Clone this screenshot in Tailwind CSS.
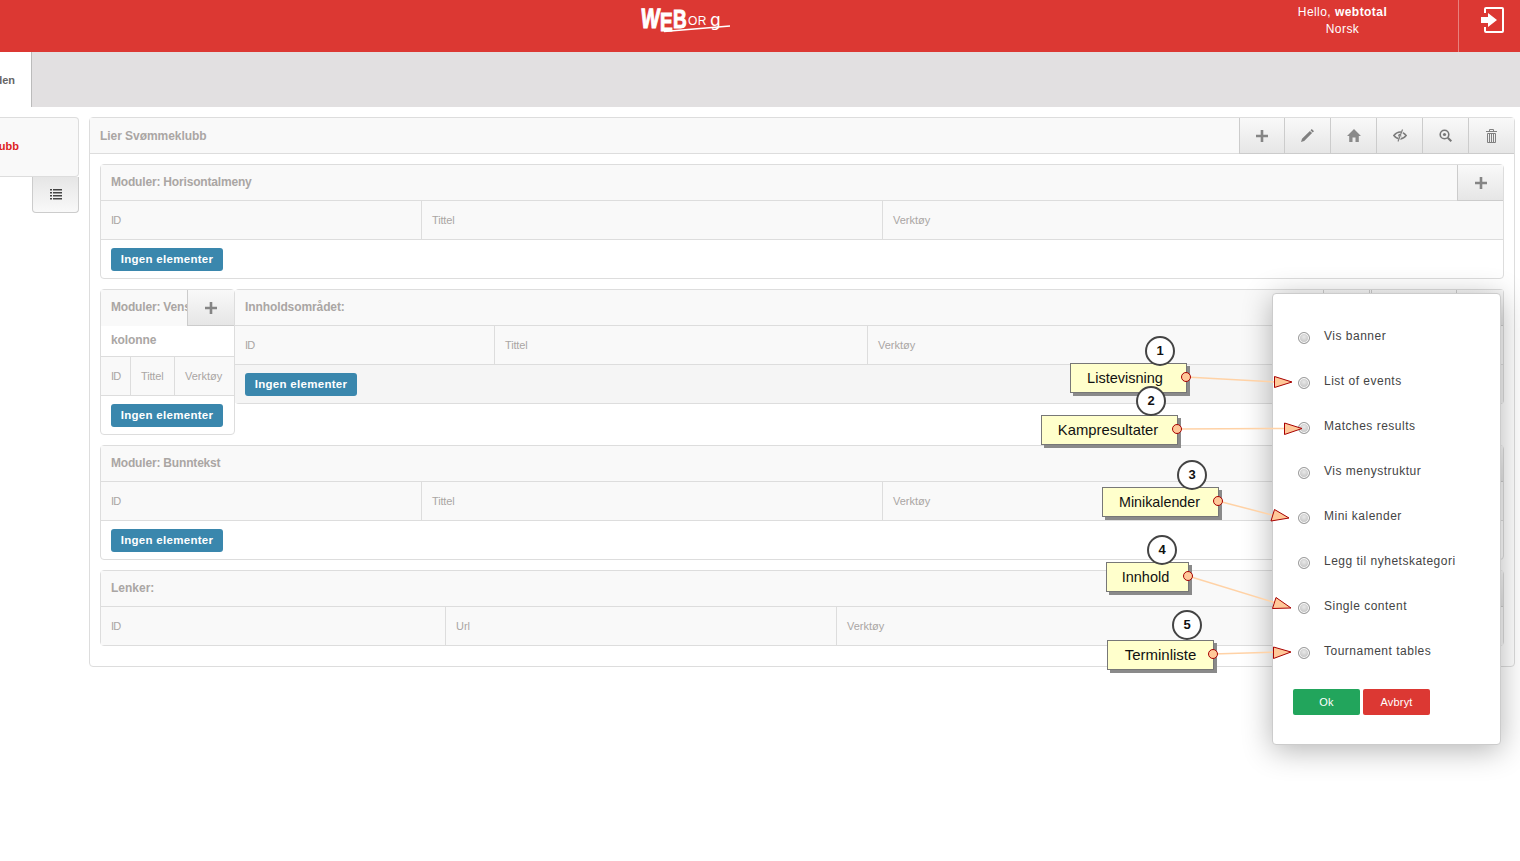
<!DOCTYPE html>
<html><head><meta charset="utf-8"><title>Weborg</title>
<script src="https://cdn.jsdelivr.net/npm/@tailwindcss/browser@4"></script></head>
<body class="relative h-[861px] overflow-hidden bg-white font-['Liberation_Sans',Arial,sans-serif] text-[12px] text-[#aaa6a4]">

<header class="flex h-[52px] bg-[#dc3833] text-white">
  <div class="relative ml-[642px] mt-[4px] h-[36px] w-[90px] font-['Liberation_Sans'] font-bold">
    <span class="absolute left-0 top-0 origin-top-left -skew-x-6 scale-y-[1.4] text-[20px] leading-[20px] [-webkit-text-stroke:0.8px_white]">W</span>
    <span class="absolute left-[18px] top-[5px] origin-top-left scale-y-[1.4] text-[19px] leading-[19px] [-webkit-text-stroke:0.8px_white]">E</span>
    <span class="absolute left-[31px] top-[2px] origin-top-left scale-y-[1.35] text-[19px] leading-[19px] [-webkit-text-stroke:0.8px_white]">B</span>
    <span class="absolute left-[46px] top-[11px] text-[12px] font-normal leading-[13px] tracking-[0.5px]">OR</span>
    <span class="absolute left-[68px] top-[8px] font-['DejaVu_Sans'] text-[17px] font-normal leading-[17px]">g</span>
    <svg class="absolute left-0 top-0" width="90" height="36" viewBox="0 0 90 36"><path d="M22 27.500 L88 22" stroke="#fff" stroke-width="1.300" fill="none"/></svg>
  </div>
  <div class="ml-auto flex w-[232px] flex-col items-center border-r border-[#e8817d] pt-[4px] leading-[17px] tracking-[0.450px]">
    <div>Hello, <b>webtotal</b></div>
    <div>Norsk</div>
  </div>
  <div class="w-[61px] pl-[22px] pt-[7px]">
    <svg width="24" height="26" viewBox="0 0 24 26" fill="none"><path d="M4 6V2C4 1.400 4.400 1 5 1H21C21.600 1 22 1.400 22 2V24C22 24.600 21.600 25 21 25H5C4.400 25 4 24.600 4 24V20" stroke="#fff" stroke-width="2"/><path d="M0 10h7V6l9 7-9 7v-4H0z" fill="#fff"/></svg>
  </div>
</header>

<nav class="flex h-[55px] bg-[#e2e0e1]">
  <div class="flex w-[32px] items-center justify-end overflow-hidden border-r border-[#bbb] bg-white pr-[16px] pt-[1px] text-[11px] font-bold text-[#666]"><span class="shrink-0">Siden</span></div>
</nav>

<main class="flex pt-[10px]">
  <aside class="w-[79px] shrink-0">
    <div class="flex h-[60px] items-center justify-end overflow-hidden rounded-r-[4px] border border-l-0 border-[#ddd] bg-[#f9f9f9] pr-[59px] pb-[1px] text-[11px] font-bold text-[#dd2222]"><span class="shrink-0">Lier Svømmeklubb</span></div>
    <div class="ml-[32px] flex h-[36px] w-[47px] items-center justify-center rounded-b-[4px] border border-t-0 border-[#ccc] bg-gradient-to-b from-[#e6e6e6] to-[#f9f9f9]">
      <svg width="12" height="11" viewBox="0 0 12 11" fill="#444"><path d="M0 0h2v1.500H0zM3 0h9v1.500H3zM0 3h2v1.500H0zM3 3h9v1.500H3zM0 6h2v1.500H0zM3 6h9v1.500H3zM0 9h2v1.500H0zM3 9h9v1.500H3z"/></svg>
    </div>
  </aside>

  <section class="ml-[10px] h-[550px] w-[1426px] rounded-[4px] border border-[#ddd]">
    <div class="flex h-[36px] border-b border-[#ddd] bg-[#f9f9f9]">
      <div class="flex-1 pl-[10px] pt-[11px] font-bold leading-[14px] tracking-[-0.050px]">Lier Svømmeklubb</div>
      <div class="flex h-[36px] w-[46px] items-center justify-center border-x border-b border-[#ccc] bg-gradient-to-b from-[#f9f9f9] to-[#e6e6e6]"><svg width="12" height="12" viewBox="0 0 12 12" fill="#858585"><path d="M4.700 0h2.600v4.700H12v2.600H7.300V12H4.700V7.300H0V4.700h4.700z"/></svg></div>
      <div class="flex h-[36px] w-[46px] items-center justify-center border-r border-b border-[#ccc] bg-gradient-to-b from-[#f9f9f9] to-[#e6e6e6]"><svg width="13" height="13" viewBox="0 0 13 13" fill="#808080"><path d="M10.800 0 13 2.200 11.700 3.500 9.500 1.300zM8.900 1.900l2.200 2.200L3.200 12 0 13l1-3.200z"/></svg></div>
      <div class="flex h-[36px] w-[46px] items-center justify-center border-r border-b border-[#ccc] bg-gradient-to-b from-[#f9f9f9] to-[#e6e6e6]"><svg width="14" height="13" viewBox="0 0 14 13" fill="#8a8a8a"><path d="M7 0 14 7h-2.200v6H8.500V8.500h-3V13H2.200V7H0z"/></svg></div>
      <div class="flex h-[36px] w-[46px] items-center justify-center border-r border-b border-[#ccc] bg-gradient-to-b from-[#f9f9f9] to-[#e6e6e6]"><svg width="14" height="13" viewBox="0 0 14 13" fill="none"><path d="M0.800 6.500C3 4 4.800 3 7 3s4 1 6.200 3.500C11 9 9.200 10 7 10S3 9 0.800 6.500z" stroke="#7c7c7c" stroke-width="1.500"/><circle cx="7" cy="6.500" r="1.800" fill="#7c7c7c"/><path d="M10 0.500 5.500 12.500" stroke="#f0f0f0" stroke-width="2"/><path d="M9.500 0.500 5 12.500" stroke="#7c7c7c" stroke-width="1.100"/></svg></div>
      <div class="flex h-[36px] w-[46px] items-center justify-center border-r border-b border-[#ccc] bg-gradient-to-b from-[#f9f9f9] to-[#e6e6e6]"><svg width="13" height="13" viewBox="0 0 13 13" fill="none"><circle cx="5.500" cy="5.500" r="4.300" stroke="#777" stroke-width="1.600"/><circle cx="5.500" cy="5.500" r="1.600" fill="#777"/><path d="M8.800 8.800l3.500 3.500" stroke="#777" stroke-width="2"/></svg></div>
      <div class="flex h-[36px] w-[45px] items-center justify-center rounded-tr-[4px] border-b border-[#ccc] bg-gradient-to-b from-[#f9f9f9] to-[#e6e6e6]"><svg width="11" height="14" viewBox="0 0 11 14" fill="none" stroke="#808080"><path d="M0 2.500h11M3.500 2V.5h4V2" stroke-width="1"/><path d="M1.500 4.500h8v9h-8zM3.500 4.500v9M5.500 4.500v9M7.500 4.500v9" stroke-width="1"/></svg></div>
    </div>

    <div class="flex flex-col gap-[10px] px-[10px] pt-[10px]">
      <div class="h-[115px] rounded-[4px] border border-[#ddd]">
        <div class="flex h-[36px] border-b border-[#ddd] bg-[#f9f9f9]">
          <div class="flex-1 pl-[10px] pt-[10px] font-bold leading-[14px] tracking-[-0.180px]">Moduler: Horisontalmeny</div>
          <div class="flex h-[36px] w-[46px] items-center justify-center rounded-tr-[4px] border-b border-l border-[#ccc] bg-gradient-to-b from-[#f9f9f9] to-[#e6e6e6]"><svg width="12" height="12" viewBox="0 0 12 12" fill="#858585"><path d="M4.700 0h2.600v4.700H12v2.600H7.300V12H4.700V7.300H0V4.700h4.700z"/></svg></div>
        </div>
        <div class="flex h-[39px] items-center border-b border-[#ddd] bg-[#f9f9f9] text-[11px]">
          <div class="flex h-full w-[321px] items-center border-r border-[#ddd] pl-[10px] tracking-[-0.800px]">ID</div>
          <div class="flex h-full w-[461px] items-center border-r border-[#ddd] pl-[10px] tracking-[-0.150px]">Tittel</div>
          <div class="pl-[10px]">Verktøy</div>
        </div>
        <div class="px-[10px] pt-[8px]"><span class="inline-block h-[23px] w-[112px] rounded-[3px] bg-[#3a87ad] text-center text-[11.500px] font-bold leading-[23px] tracking-[0.300px] text-white">Ingen elementer</span></div>
      </div>

      <div class="flex h-[146px] items-start">
        <div class="h-[146px] w-[135px] shrink-0 rounded-[4px] border border-[#ddd]">
          <div class="flex h-[36px] bg-[#f9f9f9]">
            <div class="w-[86px] overflow-hidden whitespace-nowrap pl-[10px] pt-[10px] font-bold leading-[14px] tracking-[-0.180px]">Moduler: Vens</div>
            <div class="flex h-[36px] w-[47px] items-center justify-center border-b border-l border-[#ccc] bg-gradient-to-b from-[#f9f9f9] to-[#e6e6e6]"><svg width="12" height="12" viewBox="0 0 12 12" fill="#858585"><path d="M4.700 0h2.600v4.700H12v2.600H7.300V12H4.700V7.300H0V4.700h4.700z"/></svg></div>
          </div>
          <div class="h-[31px] border-b border-[#ddd] bg-white pl-[10px] pt-[7px] font-bold leading-[14px] tracking-[-0.100px]">kolonne</div>
          <div class="flex h-[39px] items-center border-b border-[#ddd] bg-[#f9f9f9] text-[11px]">
            <div class="flex h-full w-[30px] items-center border-r border-[#ddd] pl-[10px] tracking-[-0.800px]">ID</div>
            <div class="flex h-full w-[44px] items-center border-r border-[#ddd] pl-[10px] tracking-[-0.150px]">Tittel</div>
            <div class="pl-[10px]">Verktøy</div>
          </div>
          <div class="px-[10px] pt-[8px]"><span class="inline-block h-[23px] w-[112px] rounded-[3px] bg-[#3a87ad] text-center text-[11.500px] font-bold leading-[23px] tracking-[0.300px] text-white">Ingen elementer</span></div>
        </div>
        <div class="h-[115px] flex-1 rounded-[4px] border border-l-0 border-[#ddd]">
          <div class="flex h-[36px] border-b border-[#ddd] bg-[#f9f9f9]">
            <div class="flex-1 pl-[10px] pt-[10px] font-bold leading-[14px] tracking-[-0.100px]">Innholdsområdet:</div>
            <div class="h-[36px] w-[47px] border-x border-b border-[#ccc] bg-gradient-to-b from-[#f9f9f9] to-[#e6e6e6]"></div>
            <div class="ml-[1px] h-[36px] w-[86px] border-x border-b border-[#ccc] bg-gradient-to-b from-[#f9f9f9] to-[#e6e6e6]"></div>
            <div class="h-[36px] w-[46px] rounded-tr-[4px] border-b border-[#ccc] bg-gradient-to-b from-[#f9f9f9] to-[#e6e6e6]"></div>
          </div>
          <div class="flex h-[39px] items-center border-b border-[#ddd] bg-[#f9f9f9] text-[11px]">
            <div class="flex h-full w-[260px] items-center border-r border-[#ddd] pl-[10px] tracking-[-0.800px]">ID</div>
            <div class="flex h-full w-[373px] items-center border-r border-[#ddd] pl-[10px] tracking-[-0.150px]">Tittel</div>
            <div class="pl-[10px]">Verktøy</div>
          </div>
          <div class="h-[38px] bg-[#f5f5f5] px-[10px] pt-[8px]"><span class="inline-block h-[23px] w-[112px] rounded-[3px] bg-[#3a87ad] text-center text-[11.500px] font-bold leading-[23px] tracking-[0.300px] text-white">Ingen elementer</span></div>
        </div>
      </div>

      <div class="h-[115px] rounded-[4px] border border-[#ddd]">
        <div class="flex h-[36px] border-b border-[#ddd] bg-[#f9f9f9]">
          <div class="flex-1 pl-[10px] pt-[10px] font-bold leading-[14px] tracking-[-0.180px]">Moduler: Bunntekst</div>
          <div class="h-[36px] w-[46px] rounded-tr-[4px] border-b border-l border-[#ccc] bg-gradient-to-b from-[#f9f9f9] to-[#e6e6e6]"></div>
        </div>
        <div class="flex h-[39px] items-center border-b border-[#ddd] bg-[#f9f9f9] text-[11px]">
          <div class="flex h-full w-[321px] items-center border-r border-[#ddd] pl-[10px] tracking-[-0.800px]">ID</div>
          <div class="flex h-full w-[461px] items-center border-r border-[#ddd] pl-[10px] tracking-[-0.150px]">Tittel</div>
          <div class="pl-[10px]">Verktøy</div>
        </div>
        <div class="px-[10px] pt-[8px]"><span class="inline-block h-[23px] w-[112px] rounded-[3px] bg-[#3a87ad] text-center text-[11.500px] font-bold leading-[23px] tracking-[0.300px] text-white">Ingen elementer</span></div>
      </div>

      <div class="h-[76px] rounded-[4px] border border-[#ddd]">
        <div class="flex h-[36px] border-b border-[#ddd] bg-[#f9f9f9]">
          <div class="flex-1 pl-[10px] pt-[10px] font-bold leading-[14px]">Lenker:</div>
          <div class="h-[36px] w-[46px] rounded-tr-[4px] border-b border-l border-[#ccc] bg-gradient-to-b from-[#f9f9f9] to-[#e6e6e6]"></div>
        </div>
        <div class="flex h-[38px] items-center bg-[#f9f9f9] text-[11px]">
          <div class="flex h-full w-[345px] items-center border-r border-[#ddd] pl-[10px] tracking-[-0.800px]">ID</div>
          <div class="flex h-full w-[391px] items-center border-r border-[#ddd] pl-[10px]">Url</div>
          <div class="pl-[10px]">Verktøy</div>
        </div>
      </div>
    </div>
  </section>
</main>

<!-- modal dialog -->
<div class="absolute left-[1272px] top-[293px] h-[452px] w-[229px] rounded-[4px] border border-[#ccc] bg-white px-[20px] pt-[20px] text-[12px] tracking-[0.500px] text-[#444] shadow-[0_5px_30px_rgba(0,0,0,0.3)]">
  <div class="flex h-[45px] items-start pl-[5px]"><span class="mt-[18px] h-[12px] w-[12px] shrink-0 rounded-full border border-[#999] bg-[radial-gradient(circle_at_50%_40%,#e8e8e8,#b4b4b4)] shadow-[inset_0_0_0_1px_#fff]"></span><span class="ml-[14px] mt-[14px] leading-[16px]">Vis banner</span></div>
  <div class="flex h-[45px] items-start pl-[5px]"><span class="mt-[18px] h-[12px] w-[12px] shrink-0 rounded-full border border-[#999] bg-[radial-gradient(circle_at_50%_40%,#e8e8e8,#b4b4b4)] shadow-[inset_0_0_0_1px_#fff]"></span><span class="ml-[14px] mt-[14px] leading-[16px]">List of events</span></div>
  <div class="flex h-[45px] items-start pl-[5px]"><span class="mt-[18px] h-[12px] w-[12px] shrink-0 rounded-full border border-[#999] bg-[radial-gradient(circle_at_50%_40%,#e8e8e8,#b4b4b4)] shadow-[inset_0_0_0_1px_#fff]"></span><span class="ml-[14px] mt-[14px] leading-[16px]">Matches results</span></div>
  <div class="flex h-[45px] items-start pl-[5px]"><span class="mt-[18px] h-[12px] w-[12px] shrink-0 rounded-full border border-[#999] bg-[radial-gradient(circle_at_50%_40%,#e8e8e8,#b4b4b4)] shadow-[inset_0_0_0_1px_#fff]"></span><span class="ml-[14px] mt-[14px] leading-[16px]">Vis menystruktur</span></div>
  <div class="flex h-[45px] items-start pl-[5px]"><span class="mt-[18px] h-[12px] w-[12px] shrink-0 rounded-full border border-[#999] bg-[radial-gradient(circle_at_50%_40%,#e8e8e8,#b4b4b4)] shadow-[inset_0_0_0_1px_#fff]"></span><span class="ml-[14px] mt-[14px] leading-[16px]">Mini kalender</span></div>
  <div class="flex h-[45px] items-start pl-[5px]"><span class="mt-[18px] h-[12px] w-[12px] shrink-0 rounded-full border border-[#999] bg-[radial-gradient(circle_at_50%_40%,#e8e8e8,#b4b4b4)] shadow-[inset_0_0_0_1px_#fff]"></span><span class="ml-[14px] mt-[14px] leading-[16px]">Legg til nyhetskategori</span></div>
  <div class="flex h-[45px] items-start pl-[5px]"><span class="mt-[18px] h-[12px] w-[12px] shrink-0 rounded-full border border-[#999] bg-[radial-gradient(circle_at_50%_40%,#e8e8e8,#b4b4b4)] shadow-[inset_0_0_0_1px_#fff]"></span><span class="ml-[14px] mt-[14px] leading-[16px]">Single content</span></div>
  <div class="flex h-[45px] items-start pl-[5px]"><span class="mt-[18px] h-[12px] w-[12px] shrink-0 rounded-full border border-[#999] bg-[radial-gradient(circle_at_50%_40%,#e8e8e8,#b4b4b4)] shadow-[inset_0_0_0_1px_#fff]"></span><span class="ml-[14px] mt-[14px] leading-[16px]">Tournament tables</span></div>
  <div class="mt-[15px] flex gap-[3px] text-[11px] tracking-[0.200px] text-white">
    <span class="h-[26px] w-[67px] rounded-[2px] bg-[#22a55c] text-center leading-[26px]">Ok</span>
    <span class="h-[26px] w-[67px] rounded-[2px] bg-[#dc3833] text-center leading-[26px]">Avbryt</span>
  </div>
</div>

<!-- annotation overlay -->
<svg class="absolute left-0 top-0" width="1520" height="861" viewBox="0 0 1520 861" fill="none">
  <g stroke="#ffd2a6" stroke-width="1.500">
    <path d="M1186 377 1276 382M1177 429 1286 428.500M1218 501 1276 516M1188 576 1276 603M1213 654 1276 652"/>
  </g>
  <g fill="#ffc899" stroke="#a80000" stroke-width="1">
    <path d="M1274.500 376.500 1292 382 1274.500 387.500z"/>
    <path d="M1284.500 423 1302 428.500 1284.500 434.500z"/>
    <path d="M1274.500 509.500 1289 518 1271 521z"/>
    <path d="M1276 597.500 1291 608 1272.500 608.500z"/>
    <path d="M1273.500 647 1291 652 1273.500 658.500z"/>
  </g>
</svg>

<div class="absolute left-[1070px] top-[363px] flex h-[30px] w-[117px] items-center justify-center border border-[#777] bg-[#ffffcc] pr-[7px] pt-[2px] text-[14.500px] text-[#111] shadow-[3px_3px_0_#8a8a8a]">Listevisning</div>
<div class="absolute left-[1041px] top-[415px] flex h-[30px] w-[137px] items-center justify-center border border-[#777] bg-[#ffffcc] pr-[3px] text-[14.800px] text-[#111] shadow-[3px_3px_0_#8a8a8a]">Kampresultater</div>
<div class="absolute left-[1102px] top-[487px] flex h-[30px] w-[117px] items-center justify-center border border-[#777] bg-[#ffffcc] pr-[2px] pt-[2px] text-[14.300px] text-[#111] shadow-[3px_3px_0_#8a8a8a]">Minikalender</div>
<div class="absolute left-[1106px] top-[562px] flex h-[30px] w-[83px] items-center justify-center border border-[#777] bg-[#ffffcc] pr-[4px] pt-[2px] text-[14.500px] text-[#111] shadow-[3px_3px_0_#8a8a8a]">Innhold</div>
<div class="absolute left-[1107px] top-[640px] flex h-[30px] w-[107px] items-center justify-center border border-[#777] bg-[#ffffcc] text-[15px] text-[#111] shadow-[3px_3px_0_#8a8a8a]">Terminliste</div>

<div class="absolute left-[1145px] top-[336px] flex h-[30px] w-[30px] items-center justify-center rounded-full border-2 border-[#444] bg-white text-[13px] font-bold text-[#111]">1</div>
<div class="absolute left-[1136px] top-[386px] flex h-[30px] w-[30px] items-center justify-center rounded-full border-2 border-[#444] bg-white text-[13px] font-bold text-[#111]">2</div>
<div class="absolute left-[1177px] top-[460px] flex h-[30px] w-[30px] items-center justify-center rounded-full border-2 border-[#444] bg-white text-[13px] font-bold text-[#111]">3</div>
<div class="absolute left-[1147px] top-[535px] flex h-[30px] w-[30px] items-center justify-center rounded-full border-2 border-[#444] bg-white text-[13px] font-bold text-[#111]">4</div>
<div class="absolute left-[1172px] top-[610px] flex h-[30px] w-[30px] items-center justify-center rounded-full border-2 border-[#444] bg-white text-[13px] font-bold text-[#111]">5</div>

<div class="absolute left-[1181px] top-[372px] h-[10px] w-[10px] rounded-full border border-[#a80000] bg-[#ffc899]"></div>
<div class="absolute left-[1172px] top-[424px] h-[10px] w-[10px] rounded-full border border-[#a80000] bg-[#ffc899]"></div>
<div class="absolute left-[1213px] top-[496px] h-[10px] w-[10px] rounded-full border border-[#a80000] bg-[#ffc899]"></div>
<div class="absolute left-[1183px] top-[571px] h-[10px] w-[10px] rounded-full border border-[#a80000] bg-[#ffc899]"></div>
<div class="absolute left-[1208px] top-[649px] h-[10px] w-[10px] rounded-full border border-[#a80000] bg-[#ffc899]"></div>
</body></html>
